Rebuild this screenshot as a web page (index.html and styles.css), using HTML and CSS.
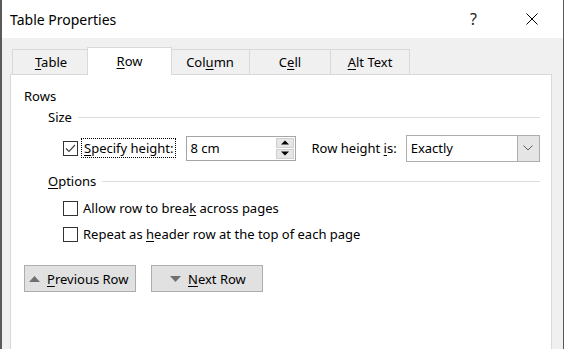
FILE: index.html
```html
<!DOCTYPE html>
<html lang="en">
<head>
    <meta charset="UTF-8">
    <meta name="viewport" content="width=device-width, initial-scale=1.0">
    <title>Table Properties</title>
    <link rel="stylesheet" href="styles.css">
</head>
<body>
    <div class="dialog">
        <div class="titlebar">
            <span class="title">Table Properties</span>
            <span class="help">?</span>
            <svg class="close" width="12" height="12" viewBox="0 0 12 12">
                <path d="M0.5 0.5 L11.5 11.5 M11.5 0.5 L0.5 11.5" stroke="#000" stroke-width="1" fill="none"/>
            </svg>
        </div>

        <div class="tabs">
            <div class="tab tab-table"><u>T</u>able</div>
            <div class="tab tab-row active"><u>R</u>ow</div>
            <div class="tab tab-column">Col<u>u</u>mn</div>
            <div class="tab tab-cell">C<u>e</u>ll</div>
            <div class="tab tab-alt"><u>A</u>lt Text</div>
        </div>

        <div class="panel">
            <div class="group-title">Rows</div>

            <div class="section">
                <div class="section-header">
                    <span>Size</span>
                    <span class="rule"></span>
                </div>
                <div class="size-row">
                    <span class="checkbox checked">
                        <svg width="13" height="13" viewBox="0 0 13 13">
                            <path d="M2 6.5 L5 9.5 L11 3" stroke="#444" stroke-width="1.2" fill="none"/>
                        </svg>
                    </span>
                    <span class="focus-label"><u>S</u>pecify height:</span>
                    <div class="spin">
                        <span class="spin-value">8 cm</span>
                        <div class="spin-buttons">
                            <span class="spin-btn">
                                <svg width="8" height="5" viewBox="0 0 8 5"><path d="M0 4.5 L4 0.5 L8 4.5 Z" fill="#000"/></svg>
                            </span>
                            <span class="spin-btn">
                                <svg width="8" height="5" viewBox="0 0 8 5"><path d="M0 0.5 L4 4.5 L8 0.5 Z" fill="#000"/></svg>
                            </span>
                        </div>
                    </div>
                    <span class="height-label">Row height <u>i</u>s:</span>
                    <div class="combo">
                        <span class="combo-value">Exactly</span>
                        <span class="combo-arrow">
                            <svg width="10" height="6" viewBox="0 0 10 6"><path d="M0.5 0.5 L5 5 L9.5 0.5" stroke="#606060" stroke-width="1" fill="none"/></svg>
                        </span>
                    </div>
                </div>
            </div>

            <div class="section options">
                <div class="section-header">
                    <span><u>O</u>ptions</span>
                    <span class="rule"></span>
                </div>
                <div class="check-row first">
                    <span class="checkbox"></span>
                    <span>Allow row to brea<u>k</u> across pages</span>
                </div>
                <div class="check-row">
                    <span class="checkbox"></span>
                    <span>Repeat as <u>h</u>eader row at the top of each page</span>
                </div>
            </div>

            <div class="nav-buttons">
                <button class="button">
                    <svg width="11" height="6" viewBox="0 0 11 6"><path d="M0 6 L5.5 0 L11 6 Z" fill="#707070"/></svg>
                    <span><u>P</u>revious Row</span>
                </button>
                <button class="button next">
                    <svg width="11" height="6" viewBox="0 0 11 6"><path d="M0 0 L5.5 6 L11 0 Z" fill="#707070"/></svg>
                    <span><u>N</u>ext Row</span>
                </button>
            </div>
        </div>
    </div>
</body>
</html>
```

FILE: styles.css
```css
body {
    margin: 0;
    padding: 0;
    background-color: #f0f0f0;
    font-family: "Noto Sans", "Open Sans", sans-serif;
    font-size: 13px;
    color: #000;
    overflow: hidden;
    white-space: nowrap;
}
u {
    text-decoration-thickness: 1px;
    text-underline-offset: 2px;
}
.dialog {
    width: 561px;
    height: 349px;
    border-left: 2px solid #5a5a5a;
    border-right: 1px solid #5a5a5a;
    background-color: #f0f0f0;
}
.titlebar {
    height: 38px;
    background-color: #fff;
    display: flex;
    align-items: center;
    font-size: 14px;
}
.title {
    padding-left: 8px;
    flex: 1;
}
.help {
    font-size: 16px;
    color: #222;
    margin-right: 49px;
}
.close {
    margin-right: 25px;
}
.tabs {
    display: flex;
    align-items: flex-end;
    height: 28px;
    padding-top: 8px;
    padding-left: 10px;
}
.tab {
    height: 25px;
    line-height: 24px;
    text-align: center;
    border: 1px solid #d9d9d9;
    border-bottom: none;
    box-sizing: border-box;
    margin-right: -1px;
    position: relative;
}
.tab-table { width: 78px; }
.tab-row { width: 85px; }
.tab-column { width: 80px; }
.tab-cell { width: 82px; }
.tab-alt { width: 80px; }
.tab.active {
    height: 28px;
    line-height: 26px;
    background-color: #fff;
    margin-bottom: -1px;
    z-index: 1;
    margin-left: -2px;
    margin-right: -2px;
}
.panel {
    margin-left: 8px;
    width: 542px;
    height: 275px;
    box-sizing: border-box;
    background-color: #fff;
    border: 1px solid #d9d9d9;
    border-bottom: none;
    padding: 11px 11px 0 13px;
}
.group-title {
    height: 20px;
    line-height: 20px;
}
.section {
    margin-left: 24px;
    margin-top: 1px;
}
.section-header {
    display: flex;
    align-items: center;
    height: 20px;
    line-height: 20px;
}
.rule {
    flex: 1;
    height: 1px;
    background-color: #dcdcdc;
    margin-left: 6px;
}
.size-row {
    display: flex;
    align-items: center;
    height: 28px;
    margin-top: 7px;
    margin-left: 15px;
}
.size-row > * {
    flex-shrink: 0;
}
.checkbox {
    width: 15px;
    height: 15px;
    box-sizing: border-box;
    border: 1px solid #333;
    background-color: #fff;
    display: flex;
    align-items: center;
    justify-content: center;
    flex-shrink: 0;
}
.focus-label {
    margin-left: 3px;
    height: 20px;
    line-height: 18px;
    padding: 0 2px;
    box-sizing: border-box;
    border: 1px dotted #000;
}
.spin {
    margin-left: 10px;
    width: 110px;
    height: 25px;
    box-sizing: border-box;
    border: 1px solid #a5a5a5;
    display: flex;
    align-items: center;
}
.spin-value {
    flex: 1;
    padding-left: 3px;
}
.spin-buttons {
    display: flex;
    flex-direction: column;
    gap: 1px;
    margin-right: 1px;
}
.spin-btn {
    width: 18px;
    height: 10px;
    box-sizing: border-box;
    border: 1px solid #cfcfcf;
    background-color: #e6e6e6;
    display: flex;
    align-items: center;
    justify-content: center;
}
.height-label {
    margin-left: 15px;
}
.combo {
    margin-left: 9px;
    width: 134px;
    height: 27px;
    box-sizing: border-box;
    border: 1px solid #adadad;
    display: flex;
    align-items: stretch;
}
.combo-value {
    flex: 1;
    padding-left: 4px;
    line-height: 25px;
}
.combo-arrow {
    width: 21px;
    background-color: #e5e5e5;
    border-left: 1px solid #adadad;
    display: flex;
    align-items: center;
    justify-content: center;
}
.options {
    margin-top: 9px;
}
.check-row {
    display: flex;
    align-items: center;
    height: 26px;
    margin-left: 15px;
}
.check-row.first {
    margin-top: 4px;
}
.check-row .checkbox {
    margin-right: 5px;
}
.nav-buttons {
    display: flex;
    gap: 15px;
    margin-top: 18px;
}
.button {
    width: 112px;
    height: 27px;
    background-color: #e1e1e1;
    border: 1px solid #adadad;
    font-family: inherit;
    font-size: 13px;
    color: #000;
    padding: 0 0 0 4px;
    display: flex;
    align-items: center;
    gap: 7px;
}
.button.next {
    padding-left: 18px;
}
```
